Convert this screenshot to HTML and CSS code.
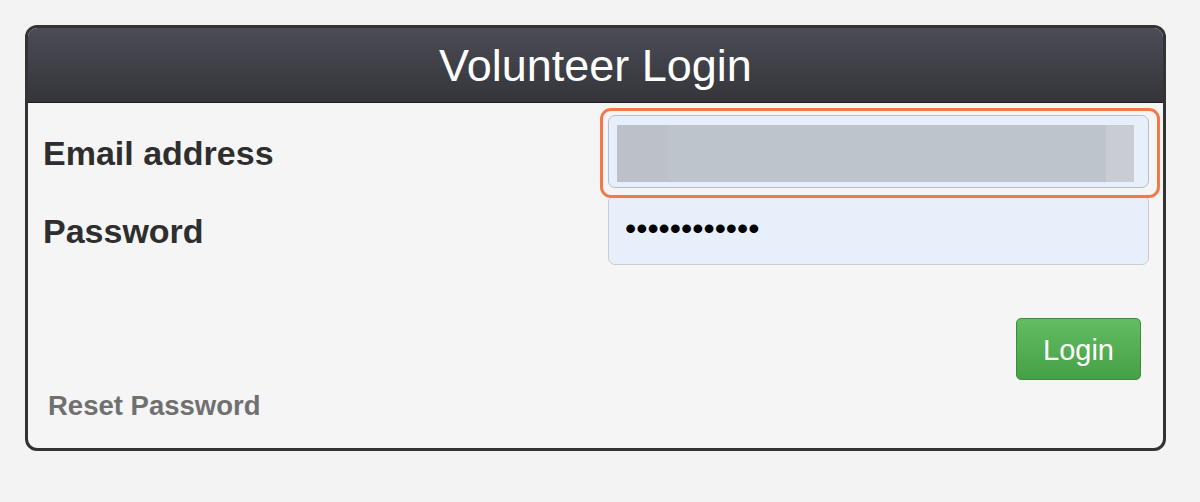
FILE: index.html
```html
<!DOCTYPE html>
<html lang="en">
<head>
    <meta charset="UTF-8">
    <meta name="viewport" content="width=device-width, initial-scale=1.0">
    <title>Volunteer Login</title>
    <link rel="stylesheet" href="styles.css">
</head>
<body>

    <div class="login-panel">
        <header class="panel-header">
            <h1>Volunteer Login</h1>
        </header>

        <form class="panel-body" onsubmit="return false">
            <div class="field-row">
                <label for="email">Email address</label>
                <div class="email-input" id="email">
                    <span class="redacted"></span>
                    <span class="redacted-end"></span>
                </div>
            </div>
            <div class="field-row">
                <label for="password">Password</label>
                <input type="password" id="password" class="password-input" value="secretpass12">
            </div>

            <!-- highlight drawn over the email field -->
            <div class="highlight"></div>

            <div class="actions">
                <button type="submit" class="login-button">Login</button>
            </div>

            <a href="#" class="reset-link">Reset Password</a>
        </form>
    </div>

</body>
</html>
```

FILE: styles.css
```css
body {
    font-family: 'Liberation Sans', Arial, sans-serif;
    background-color: #f3f3f3;
    margin: 0;
    padding: 25px;
}

.login-panel {
    width: 1141px;
    height: 426px;
    box-sizing: border-box;
    background-color: #f5f5f5;
    border: 3px solid #333;
    border-radius: 12px;
    overflow: hidden;
    display: flex;
    flex-direction: column;
}

.panel-header {
    height: 74px;
    background: linear-gradient(#4c4c56, #34343a);
    border-bottom: 1px solid #1e1e22;
    text-align: center;
}

h1 {
    margin: 0;
    color: #fff;
    font-size: 45px;
    font-weight: normal;
    line-height: 76px;
}

.panel-body {
    position: relative;
    flex: 1;
    margin: 0;
    padding: 12px 14px 0 15px;
    display: flex;
    flex-direction: column;
    gap: 7px;
}

.field-row {
    display: grid;
    grid-template-columns: 1fr 541px;
    align-items: center;
}

.field-row label {
    font-size: 34px;
    font-weight: bold;
    color: #2e2e2e;
    padding-top: 3px;
}

.email-input {
    height: 73px;
    box-sizing: border-box;
    background-color: #e7effb;
    border: 1px solid #b4bfcd;
    border-radius: 7px;
    padding: 9px 14px 5px 8px;
    display: flex;
}

.redacted {
    flex: 1;
    background: linear-gradient(90deg, #bcc1c9 0, #bcc1c9 51px, #bec4cc 51px);
}

.redacted-end {
    width: 28px;
    background-color: #c9cdd3;
}

.password-input {
    height: 70px;
    box-sizing: border-box;
    background-color: #e7effb;
    border: 1px solid #c9cdd3;
    border-radius: 7px;
    padding: 0 0 4px 16px;
    font-family: 'Liberation Sans', Arial, sans-serif;
    font-size: 32px;
    color: #000;
    outline: none;
}

.highlight {
    position: absolute;
    left: 572px;
    top: 5px;
    width: 560px;
    height: 90px;
    box-sizing: border-box;
    border: 3px solid #f37a48;
    border-radius: 11px;
}

.actions {
    display: flex;
    justify-content: flex-end;
    margin-top: 46px;
    padding-right: 8px;
}

.login-button {
    width: 125px;
    height: 62px;
    background: linear-gradient(#62bc62, #46a046);
    color: #fff;
    border: 1px solid #3d8c3d;
    border-radius: 5px;
    font-family: 'Liberation Sans', Arial, sans-serif;
    font-size: 29px;
    padding: 3px 0 0;
    cursor: pointer;
}

.reset-link {
    align-self: flex-start;
    margin-top: 3px;
    margin-left: 5px;
    color: #707070;
    font-size: 27.5px;
    font-weight: bold;
    text-decoration: none;
    line-height: 32px;
}
```
